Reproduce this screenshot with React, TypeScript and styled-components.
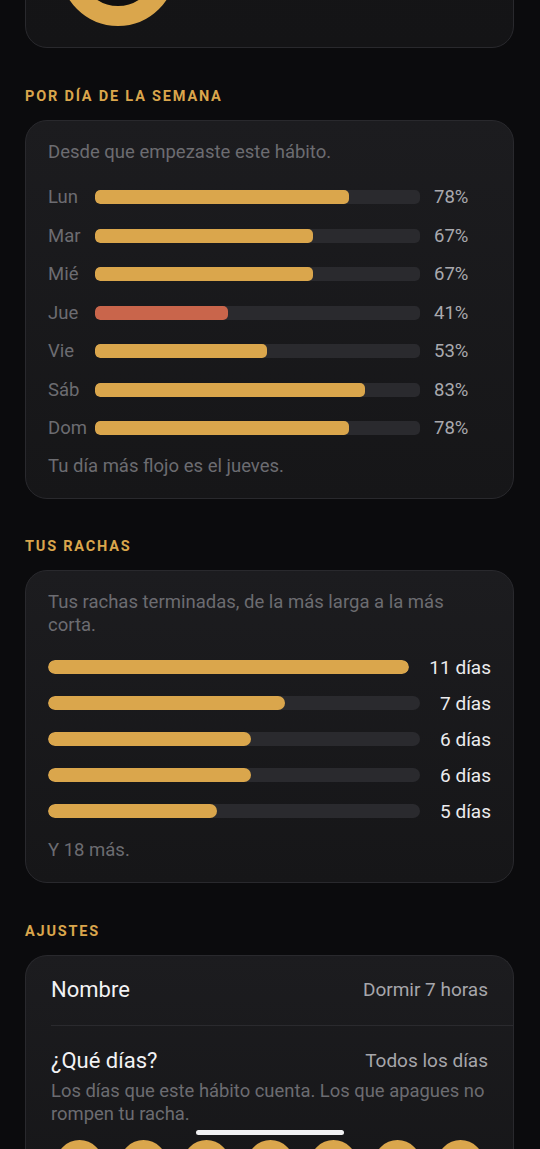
import React from 'react';
import styled, { createGlobalStyle } from 'styled-components';

const GlobalStyle = createGlobalStyle`
  html, body {
    margin: 0;
    padding: 0;
    background: #0b0b0d;
  }
  body {
    font-family: Roboto, "Noto Sans", sans-serif;
    -webkit-font-smoothing: antialiased;
    overflow: hidden;
  }
`;

const GOLD = '#daa64c';
const RED = '#c9654b';

const Page = styled.div`
  width: 540px;
  height: 1149px;
  overflow: hidden;
  box-sizing: border-box;
  padding: 0 26px 0 25px;
  display: flex;
  flex-direction: column;
`;

const Card = styled.div`
  background: linear-gradient(180deg, #1c1c1f 0%, #161618 100%);
  border: 1px solid #29292d;
  border-radius: 22px;
  box-sizing: border-box;
`;

const RingCard = styled(Card)`
  margin-top: -112px;
  padding: 21px 34px;
  display: flex;
  align-items: center;
  background: linear-gradient(180deg, #151517 0%, #141416 100%);
`;

const StatCard = styled(Card)`
  padding: 20px 22px 20px 22px;
  display: flex;
  flex-direction: column;
`;

const SettingsCard = styled(Card)`
  display: flex;
  flex-direction: column;
  flex-shrink: 0;
  border-bottom: none;
  border-bottom-left-radius: 0;
  border-bottom-right-radius: 0;
`;

const SectionTitle = styled.h2<{ $top?: number }>`
  margin: ${p => p.$top ?? 40}px 0 15px;
  font-size: 14.5px;
  line-height: 17px;
  font-weight: 700;
  letter-spacing: 1.8px;
  color: ${GOLD};
  text-transform: uppercase;
`;

const Muted = styled.p<{ $gap?: number }>`
  margin: 0;
  font-size: 18.5px;
  line-height: 23px;
  color: #6c6c71;
  margin-bottom: ${p => p.$gap ?? 0}px;
`;

const Rows = styled.div<{ $gap: number }>`
  display: flex;
  flex-direction: column;
  gap: ${p => p.$gap}px;
`;

const DayRow = styled.div`
  display: flex;
  align-items: center;
  height: 24px;
`;

const DayLabel = styled.span`
  width: 47px;
  flex-shrink: 0;
  font-size: 18.5px;
  color: #6c6c71;
`;

const Track = styled.div<{ $round?: number }>`
  flex: 1;
  height: 14px;
  border-radius: ${p => p.$round ?? 5}px;
  background: #2a2a2e;
  overflow: hidden;
`;

const Fill = styled.div<{ $color: string }>`
  height: 100%;
  border-radius: inherit;
  background: ${p => p.$color};
`;

const Percent = styled.span`
  width: 57px;
  margin-left: 14px;
  flex-shrink: 0;
  font-size: 18.5px;
  color: #a9a9ae;
`;

const StreakRow = styled.div`
  display: flex;
  align-items: center;
  gap: 20px;
  height: 24px;
`;

const StreakValue = styled.span`
  font-size: 19px;
  color: #ececee;
  white-space: nowrap;
`;

const SettingRow = styled.div<{ $divider?: boolean }>`
  margin-left: 25px;
  padding: ${p => (p.$divider ? '22px 25px 23px 0' : '23px 25px 23px 0')};
  border-bottom: ${p => (p.$divider ? '1px solid #2a2a2e' : 'none')};
`;

const SettingHead = styled.div`
  display: flex;
  justify-content: space-between;
  align-items: center;
  height: 24px;
`;

const SettingName = styled.span`
  font-size: 22px;
  color: #f2f2f4;
`;

const SettingValue = styled.span`
  font-size: 19px;
  color: #a6a6ab;
`;

const SettingHint = styled.p`
  margin: 6px 0 0;
  font-size: 18.4px;
  line-height: 23px;
  color: #6c6c71;
`;

const DayDots = styled.div`
  display: flex;
  justify-content: space-between;
  padding: 0 4px 0 5px;
  margin-top: 15px;
`;

const DayDot = styled.div`
  width: 47px;
  height: 47px;
  border-radius: 50%;
  background: ${GOLD};
`;

const HomeBar = styled.div`
  position: fixed;
  left: 196px;
  top: 1130px;
  width: 148px;
  height: 5px;
  border-radius: 3px;
  background: #f1f1f3;
`;

const weekdays = [
  { day: 'Lun', pct: 78 },
  { day: 'Mar', pct: 67 },
  { day: 'Mié', pct: 67 },
  { day: 'Jue', pct: 41, weak: true },
  { day: 'Vie', pct: 53 },
  { day: 'Sáb', pct: 83 },
  { day: 'Dom', pct: 78 },
];

const streaks = [11, 7, 6, 6, 5];

function Ring() {
  return (
    <svg width="116" height="116" viewBox="0 0 116 116">
      <circle cx="58" cy="58" r="48" fill="#0f0f11" />
      <circle cx="58" cy="58" r="48" fill="none" stroke={GOLD} strokeWidth="20" />
    </svg>
  );
}

export default function App() {
  const maxStreak = Math.max(...streaks);
  return (
    <>
      <GlobalStyle />
      <Page>
        <RingCard>
          <Ring />
        </RingCard>

        <SectionTitle>Por día de la semana</SectionTitle>
        <StatCard>
          <Muted $gap={21}>Desde que empezaste este hábito.</Muted>
          <Rows $gap={14.5}>
            {weekdays.map(w => (
              <DayRow key={w.day}>
                <DayLabel>{w.day}</DayLabel>
                <Track>
                  <Fill $color={w.weak ? RED : GOLD} style={{ width: `${w.pct}%` }} />
                </Track>
                <Percent>{w.pct}%</Percent>
              </DayRow>
            ))}
          </Rows>
          <Muted style={{ marginTop: 14.5 }}>Tu día más flojo es el jueves.</Muted>
        </StatCard>

        <SectionTitle $top={39}>Tus rachas</SectionTitle>
        <StatCard>
          <Muted $gap={18.5}>Tus rachas terminadas, de la más larga a la más corta.</Muted>
          <Rows $gap={12}>
            {streaks.map((s, i) => (
              <StreakRow key={i}>
                <Track $round={7}>
                  <Fill $color={GOLD} style={{ width: `${(s / maxStreak) * 100}%` }} />
                </Track>
                <StreakValue>{s} días</StreakValue>
              </StreakRow>
            ))}
          </Rows>
          <Muted style={{ marginTop: 15.5 }}>Y 18 más.</Muted>
        </StatCard>

        <SectionTitle>Ajustes</SectionTitle>
        <SettingsCard>
          <SettingRow $divider>
            <SettingHead>
              <SettingName>Nombre</SettingName>
              <SettingValue>Dormir 7 horas</SettingValue>
            </SettingHead>
          </SettingRow>
          <SettingRow>
            <SettingHead>
              <SettingName>¿Qué días?</SettingName>
              <SettingValue>Todos los días</SettingValue>
            </SettingHead>
            <SettingHint>Los días que este hábito cuenta. Los que apagues no rompen tu racha.</SettingHint>
            <DayDots>
              {Array.from({ length: 7 }).map((_, i) => (
                <DayDot key={i} />
              ))}
            </DayDots>
          </SettingRow>
        </SettingsCard>
      </Page>
      <HomeBar />
    </>
  );
}
